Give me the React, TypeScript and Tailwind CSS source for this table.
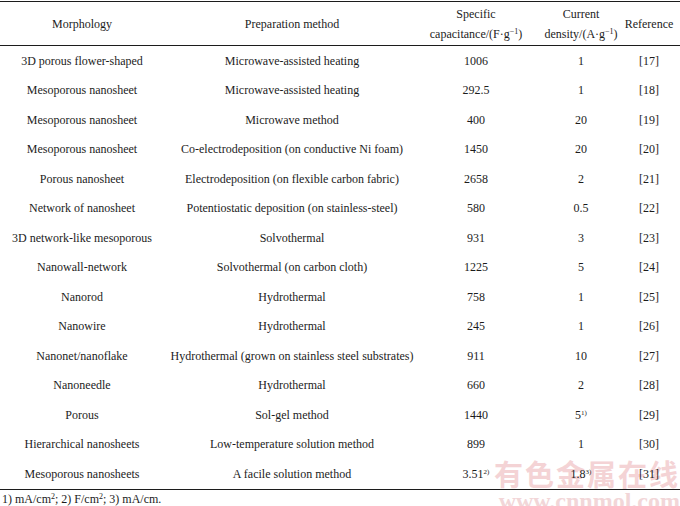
import React from "react";

type Row = {
  morphology: string;
  method: string;
  capacitance: React.ReactNode;
  density: React.ReactNode;
  reference: string;
};

const Note = ({ n }: { n: string }) => (
  <sup className="text-[7px]">{n})</sup>
);

const rows: Row[] = [
  { morphology: "3D porous flower-shaped", method: "Microwave-assisted heating", capacitance: "1006", density: "1", reference: "[17]" },
  { morphology: "Mesoporous nanosheet", method: "Microwave-assisted heating", capacitance: "292.5", density: "1", reference: "[18]" },
  { morphology: "Mesoporous nanosheet", method: "Microwave method", capacitance: "400", density: "20", reference: "[19]" },
  { morphology: "Mesoporous nanosheet", method: "Co-electrodeposition (on conductive Ni foam)", capacitance: "1450", density: "20", reference: "[20]" },
  { morphology: "Porous nanosheet", method: "Electrodeposition (on flexible carbon fabric)", capacitance: "2658", density: "2", reference: "[21]" },
  { morphology: "Network of nanosheet", method: "Potentiostatic deposition (on stainless-steel)", capacitance: "580", density: "0.5", reference: "[22]" },
  { morphology: "3D network-like mesoporous", method: "Solvothermal", capacitance: "931", density: "3", reference: "[23]" },
  { morphology: "Nanowall-network", method: "Solvothermal (on carbon cloth)", capacitance: "1225", density: "5", reference: "[24]" },
  { morphology: "Nanorod", method: "Hydrothermal", capacitance: "758", density: "1", reference: "[25]" },
  { morphology: "Nanowire", method: "Hydrothermal", capacitance: "245", density: "1", reference: "[26]" },
  { morphology: "Nanonet/nanoflake", method: "Hydrothermal (grown on stainless steel substrates)", capacitance: "911", density: "10", reference: "[27]" },
  { morphology: "Nanoneedle", method: "Hydrothermal", capacitance: "660", density: "2", reference: "[28]" },
  { morphology: "Porous", method: "Sol-gel method", capacitance: "1440", density: <>5<Note n="1" /></>, reference: "[29]" },
  { morphology: "Hierarchical nanosheets", method: "Low-temperature solution method", capacitance: "899", density: "1", reference: "[30]" },
  { morphology: "Mesoporous nanosheets", method: "A facile solution method", capacitance: <>3.51<Note n="2" /></>, density: <>1.8<Note n="3" /></>, reference: "[31]" },
];

// column widths picked so the centres line up with the scan
const cols = "grid grid-cols-[164px_256px_112px_98px_50px]";
const cell = "flex justify-center whitespace-nowrap";

function App() {
  return (
    <div className="relative w-[680px] h-[506px] bg-white text-[12px] text-[#1c1c1c] overflow-hidden font-['Liberation_Serif','Times_New_Roman',serif]">
      {/* watermark sits under the table */}
      <div className="absolute right-[0px] top-[456px] flex flex-col items-end pointer-events-none select-none">
        <div className="text-[29px] leading-[34px] tracking-[2px] font-bold text-[#f4d3d5] font-['Noto_Sans_CJK_SC',sans-serif]">
          有色金属在线
        </div>
        <div className="text-[24px] leading-[22px] font-bold text-[#f2d6d8]">
          www.cnnmol.com
        </div>
      </div>

      <div className="relative">
        <div className="mt-[1px] border-t-[1.5px] border-b-[1.5px] border-[#1c1c1c]">
          <div className={`${cols} h-[43px] items-center text-center leading-[20px]`}>
            <div className={cell}>Morphology</div>
            <div className={cell}>Preparation method</div>
            <div>
              Specific
              <br />
              capacitance/(F·g<sup className="text-[8px]">−1</sup>)
            </div>
            <div>
              Current
              <br />
              density/(A·g<sup className="text-[8px]">−1</sup>)
            </div>
            <div className={`${cell} pr-[12px]`}>Reference</div>
          </div>
        </div>
        <div className="border-b-[1.5px] border-[#1c1c1c]">
          {rows.map((r, i) => (
            <div key={i} className={`${cols} h-[29.5px] items-center`}>
              <div className={cell}><span>{r.morphology}</span></div>
              <div className={cell}><span>{r.method}</span></div>
              <div className={cell}><span>{r.capacitance}</span></div>
              <div className={cell}><span>{r.density}</span></div>
              <div className={`${cell} pr-[12px]`}><span>{r.reference}</span></div>
            </div>
          ))}
        </div>
        <div className="pl-[2px] pt-[1px] leading-[16px]">
          1) mA/cm<sup className="text-[8px]">2</sup>; 2) F/cm<sup className="text-[8px]">2</sup>; 3) mA/cm.
        </div>
      </div>
    </div>
  );
}

export default App;
